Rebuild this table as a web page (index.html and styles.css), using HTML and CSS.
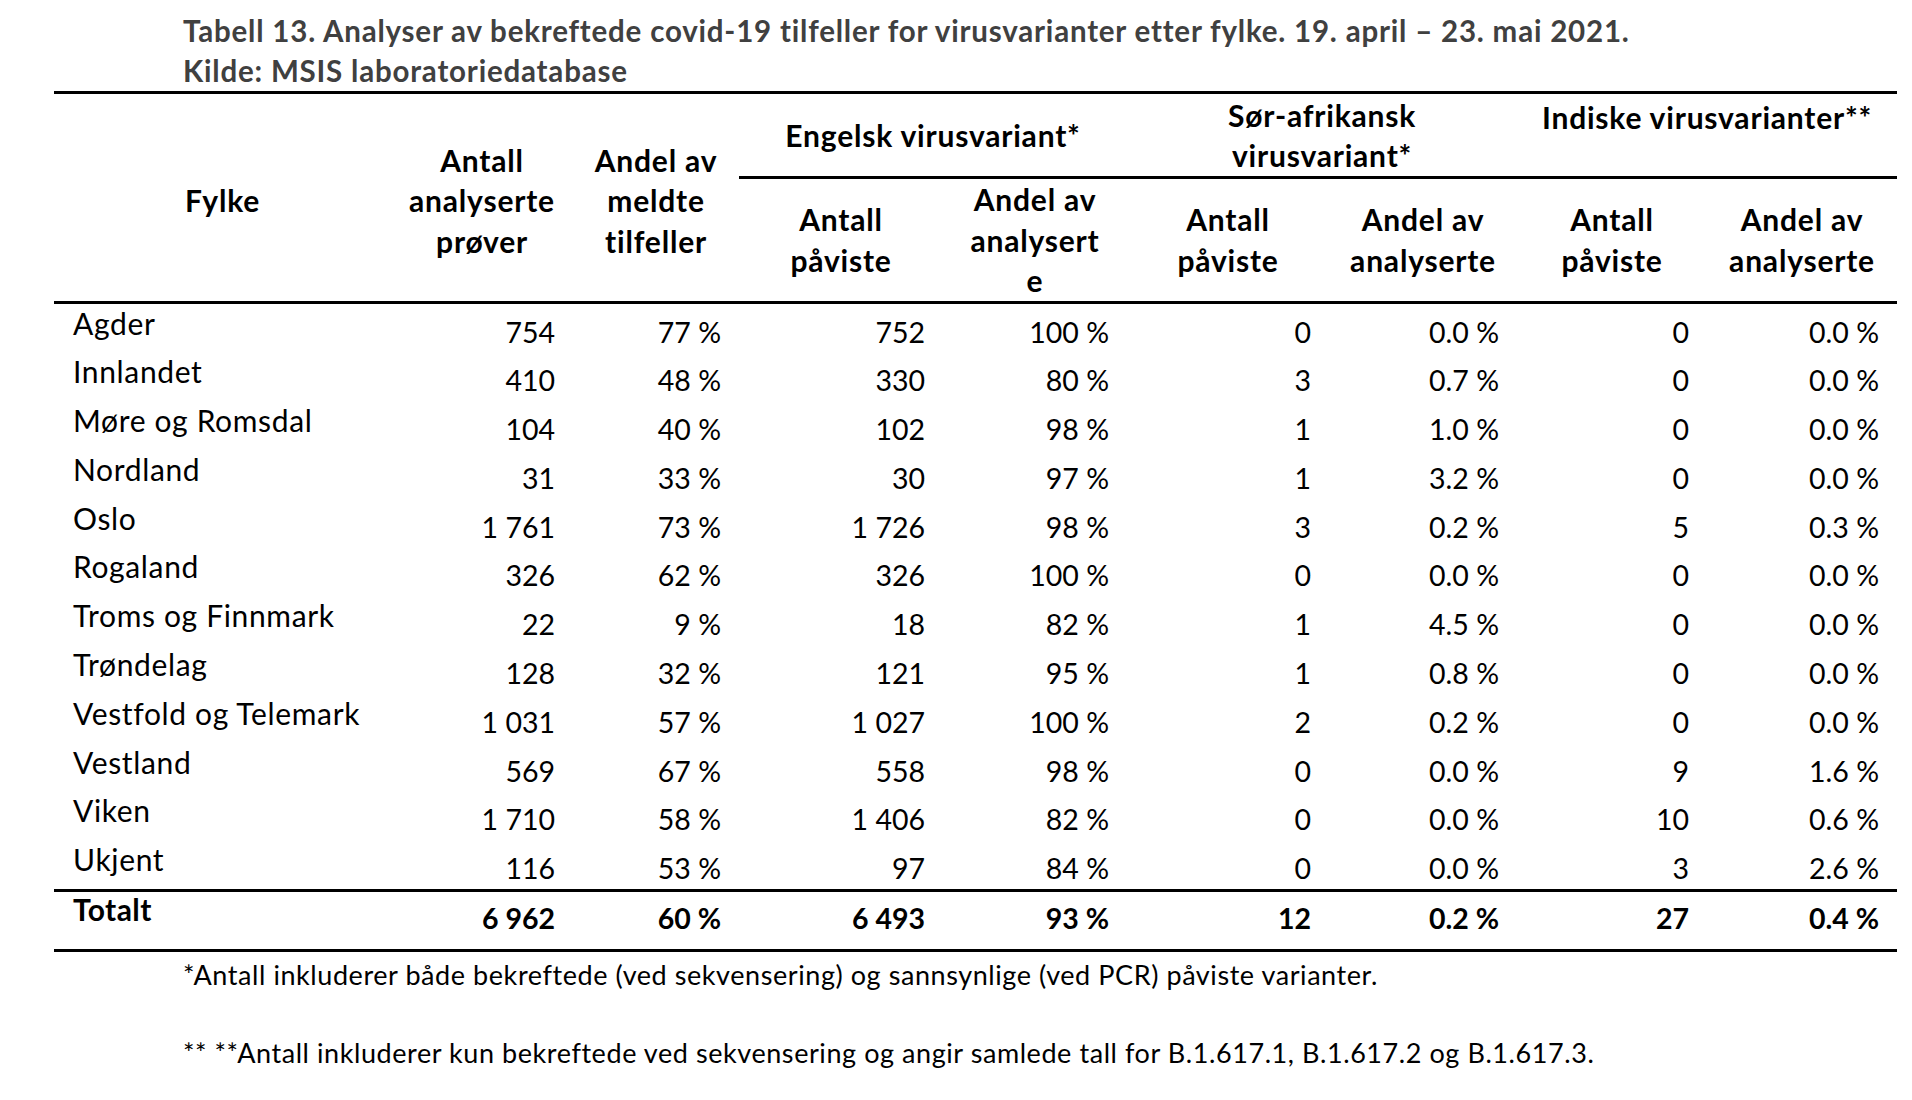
FILE: index.html
```html
<!DOCTYPE html>
<html lang="no">
<head>
<meta charset="utf-8">
<title>Tabell 13</title>
<link rel="stylesheet" href="styles.css">
</head>
<body>
<div class="page">
  <div class="caption">
    <div>Tabell 13. Analyser av bekreftede covid-19 tilfeller for virusvarianter etter fylke. 19. april – 23. mai 2021.</div>
    <div>Kilde: MSIS laboratoriedatabase</div>
  </div>
  <table class="tbl">
    <colgroup>
      <col class="c0"><col class="c1"><col class="c2"><col class="c3"><col class="c4"><col class="c5"><col class="c6"><col class="c7"><col class="c8">
    </colgroup>
    <thead>
      <tr class="r-group">
        <th rowspan="2" class="h-span">Fylke</th>
        <th rowspan="2" class="h-span">Antall<br>analyserte<br>prøver</th>
        <th rowspan="2" class="h-span">Andel av<br>meldte<br>tilfeller</th>
        <th colspan="2" class="h-group">Engelsk virusvariant*</th>
        <th colspan="2" class="h-group">Sør-afrikansk<br>virusvariant*</th>
        <th colspan="2" class="h-group h-top">Indiske virusvarianter**</th>
      </tr>
      <tr class="r-sub">
        <th class="h-sub">Antall<br>påviste</th>
        <th class="h-sub">Andel av<br>analysert<br>e</th>
        <th class="h-sub">Antall<br>påviste</th>
        <th class="h-sub">Andel av<br>analyserte</th>
        <th class="h-sub">Antall<br>påviste</th>
        <th class="h-sub">Andel av<br>analyserte</th>
      </tr>
    </thead>
    <tbody>
      <tr class="row"><td class="name">Agder</td><td class="num">754</td><td class="num">77&nbsp;%</td><td class="num">752</td><td class="num">100&nbsp;%</td><td class="num">0</td><td class="num">0.0&nbsp;%</td><td class="num">0</td><td class="num">0.0&nbsp;%</td></tr>
      <tr class="row"><td class="name">Innlandet</td><td class="num">410</td><td class="num">48&nbsp;%</td><td class="num">330</td><td class="num">80&nbsp;%</td><td class="num">3</td><td class="num">0.7&nbsp;%</td><td class="num">0</td><td class="num">0.0&nbsp;%</td></tr>
      <tr class="row"><td class="name">Møre og Romsdal</td><td class="num">104</td><td class="num">40&nbsp;%</td><td class="num">102</td><td class="num">98&nbsp;%</td><td class="num">1</td><td class="num">1.0&nbsp;%</td><td class="num">0</td><td class="num">0.0&nbsp;%</td></tr>
      <tr class="row"><td class="name">Nordland</td><td class="num">31</td><td class="num">33&nbsp;%</td><td class="num">30</td><td class="num">97&nbsp;%</td><td class="num">1</td><td class="num">3.2&nbsp;%</td><td class="num">0</td><td class="num">0.0&nbsp;%</td></tr>
      <tr class="row"><td class="name">Oslo</td><td class="num">1&nbsp;761</td><td class="num">73&nbsp;%</td><td class="num">1&nbsp;726</td><td class="num">98&nbsp;%</td><td class="num">3</td><td class="num">0.2&nbsp;%</td><td class="num">5</td><td class="num">0.3&nbsp;%</td></tr>
      <tr class="row"><td class="name">Rogaland</td><td class="num">326</td><td class="num">62&nbsp;%</td><td class="num">326</td><td class="num">100&nbsp;%</td><td class="num">0</td><td class="num">0.0&nbsp;%</td><td class="num">0</td><td class="num">0.0&nbsp;%</td></tr>
      <tr class="row"><td class="name">Troms og Finnmark</td><td class="num">22</td><td class="num">9&nbsp;%</td><td class="num">18</td><td class="num">82&nbsp;%</td><td class="num">1</td><td class="num">4.5&nbsp;%</td><td class="num">0</td><td class="num">0.0&nbsp;%</td></tr>
      <tr class="row"><td class="name">Trøndelag</td><td class="num">128</td><td class="num">32&nbsp;%</td><td class="num">121</td><td class="num">95&nbsp;%</td><td class="num">1</td><td class="num">0.8&nbsp;%</td><td class="num">0</td><td class="num">0.0&nbsp;%</td></tr>
      <tr class="row"><td class="name">Vestfold og Telemark</td><td class="num">1&nbsp;031</td><td class="num">57&nbsp;%</td><td class="num">1&nbsp;027</td><td class="num">100&nbsp;%</td><td class="num">2</td><td class="num">0.2&nbsp;%</td><td class="num">0</td><td class="num">0.0&nbsp;%</td></tr>
      <tr class="row"><td class="name">Vestland</td><td class="num">569</td><td class="num">67&nbsp;%</td><td class="num">558</td><td class="num">98&nbsp;%</td><td class="num">0</td><td class="num">0.0&nbsp;%</td><td class="num">9</td><td class="num">1.6&nbsp;%</td></tr>
      <tr class="row"><td class="name">Viken</td><td class="num">1&nbsp;710</td><td class="num">58&nbsp;%</td><td class="num">1&nbsp;406</td><td class="num">82&nbsp;%</td><td class="num">0</td><td class="num">0.0&nbsp;%</td><td class="num">10</td><td class="num">0.6&nbsp;%</td></tr>
      <tr class="row"><td class="name">Ukjent</td><td class="num">116</td><td class="num">53&nbsp;%</td><td class="num">97</td><td class="num">84&nbsp;%</td><td class="num">0</td><td class="num">0.0&nbsp;%</td><td class="num">3</td><td class="num">2.6&nbsp;%</td></tr>
    </tbody>
    <tfoot>
      <tr class="total"><td class="name">Totalt</td><td class="num">6&nbsp;962</td><td class="num">60&nbsp;%</td><td class="num">6&nbsp;493</td><td class="num">93&nbsp;%</td><td class="num">12</td><td class="num">0.2&nbsp;%</td><td class="num">27</td><td class="num">0.4&nbsp;%</td></tr>
    </tfoot>
  </table>
  <div class="notes">
    <p class="note">*Antall inkluderer både bekreftede (ved sekvensering) og sannsynlige (ved PCR) påviste varianter.</p>
    <p class="note note-gap">** **Antall inkluderer kun bekreftede ved sekvensering og angir samlede tall for B.1.617.1, B.1.617.2 og B.1.617.3.</p>
  </div>
</div>
</body>
</html>
```

FILE: styles.css
```css
html, body {
  margin: 0;
  padding: 0;
  background: #ffffff;
}

body {
  font-family: Lato, "Open Sans", "DejaVu Sans", sans-serif;
  color: #000000;
}

.page {
  width: 1912px;
}

.caption {
  margin-left: 183px;
  padding-top: 11px;
  height: 80px;
  font-size: 29.5px;
  letter-spacing: 0.8px;
  line-height: 40px;
  font-weight: 700;
  color: #404040;
  white-space: nowrap;
}

.tbl {
  margin-left: 54px;
  width: 1843px;
  table-layout: fixed;
  border-collapse: separate;
  border-spacing: 0;
  font-size: 28.5px;
}

.c0 { width: 337px; }
.c1 { width: 182px; }
.c2 { width: 166px; }
.c3 { width: 204px; }
.c4 { width: 184px; }
.c5 { width: 202px; }
.c6 { width: 188px; }
.c7 { width: 190px; }
.c8 { width: 190px; }

.tbl th {
  font-size: 30px;
  letter-spacing: 0.8px;
  font-weight: 700;
  text-align: center;
  vertical-align: middle;
  line-height: 40.5px;
  padding: 0 4px;
  white-space: nowrap;
}

.r-group { height: 88px; }
.r-sub { height: 123px; }

.h-span {
  border-top: 3px solid #000;
  border-bottom: 3px solid #000;
  padding-top: 6px !important;
}

.h-group {
  border-top: 3px solid #000;
  border-bottom: 3px solid #000;
}

.h-top {
  vertical-align: top !important;
  padding-top: 3px !important;
}

.h-sub {
  border-bottom: 3px solid #000;
}

.row { height: 48.8px; }

.tbl td {
  line-height: 34px;
  vertical-align: top;
  white-space: nowrap;
}

.name {
  text-align: left;
  font-size: 30px;
  letter-spacing: 0.65px;
  padding: 2px 0 0 19px;
}

.num {
  text-align: right;
  padding: 11px 18px 0 0;
}

.total { height: 63.4px; }

.total td {
  font-weight: 700;
  border-top: 3px solid #000;
  border-bottom: 3px solid #000;
}

.total .name {
  padding-top: 0;
  letter-spacing: 0.4px;
}
.total .num { padding-top: 8.5px; }

.notes {
  margin-left: 183px;
  padding-top: 5px;
}

.note {
  margin: 0;
  font-size: 27px;
  letter-spacing: 0.57px;
  line-height: 36px;
  white-space: nowrap;
}

.note-gap {
  margin-top: 42px;
}
```
